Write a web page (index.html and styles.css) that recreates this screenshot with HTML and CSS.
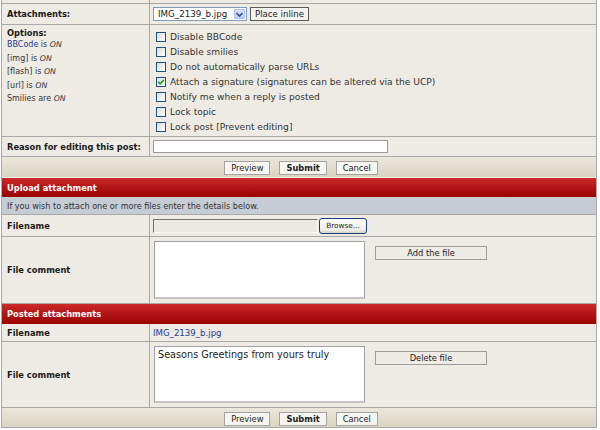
FILE: index.html
```html
<!DOCTYPE html>
<html>
<head>
<meta charset="utf-8">
<title>Edit post</title>
<link rel="stylesheet" href="styles.css">
</head>
<body>
<div class="frame">
  <div class="row stub"><div class="lc"></div><div class="rc"></div></div>

  <div class="row r-attach">
    <div class="lc"><span class="lbl">Attachments:</span></div>
    <div class="rc">
      <div class="select">
        <span class="sel-text">IMG_2139_b.jpg</span>
        <span class="sel-btn"><svg width="9" height="9" viewBox="0 0 9 9"><path d="M1.5 3 L4.5 6 L7.5 3" fill="none" stroke="#3a4f82" stroke-width="1.6"/></svg></span>
      </div>
      <span class="btn btn-dark">Place inline</span>
    </div>
  </div>

  <div class="row r-options">
    <div class="lc">
      <span class="lbl">Options:</span>
      <div class="opt-info">
        <div><span class="lnk">BBCode</span> is <i>ON</i></div>
        <div>[img] is <i>ON</i></div>
        <div>[flash] is <i>ON</i></div>
        <div>[url] is <i>ON</i></div>
        <div>Smilies are <i>ON</i></div>
      </div>
    </div>
    <div class="rc">
      <ul class="checks">
        <li><span class="cb"></span>Disable BBCode</li>
        <li><span class="cb"></span>Disable smilies</li>
        <li><span class="cb"></span>Do not automatically parse URLs</li>
        <li><span class="cb"><svg width="8" height="8" viewBox="0 0 8 8"><path d="M1.2 3.8 L3.2 5.8 L6.9 1.9" fill="none" stroke="#21a121" stroke-width="1.7"/></svg></span>Attach a signature (signatures can be altered via the UCP)</li>
        <li><span class="cb"></span>Notify me when a reply is posted</li>
        <li><span class="cb"></span>Lock topic</li>
        <li><span class="cb"></span>Lock post [Prevent editing]</li>
      </ul>
    </div>
  </div>

  <div class="row r-reason">
    <div class="lc"><span class="lbl">Reason for editing this post:</span></div>
    <div class="rc"><span class="input"></span></div>
  </div>

  <div class="bar-buttons">
    <span class="btn">Preview</span>
    <span class="btn bold">Submit</span>
    <span class="btn">Cancel</span>
  </div>

  <div class="cat">Upload attachment</div>
  <div class="info">If you wish to attach one or more files enter the details below.</div>

  <div class="row r-file">
    <div class="lc"><span class="lbl">Filename</span></div>
    <div class="rc">
      <span class="file-box"></span>
      <span class="browse">Browse...</span>
    </div>
  </div>

  <div class="row r-comment">
    <div class="lc"><span class="lbl">File comment</span></div>
    <div class="rc">
      <div class="textarea"></div>
      <span class="btn btn-wide">Add the file</span>
    </div>
  </div>

  <div class="cat cat2">Posted attachments</div>

  <div class="row r-file2">
    <div class="lc"><span class="lbl">Filename</span></div>
    <div class="rc"><span class="lnk file-link">IMG_2139_b.jpg</span></div>
  </div>

  <div class="row r-comment2">
    <div class="lc"><span class="lbl">File comment</span></div>
    <div class="rc">
      <div class="textarea">Seasons Greetings from yours truly</div>
      <span class="btn btn-wide">Delete file</span>
    </div>
  </div>

  <div class="bar-buttons bar-last">
    <span class="btn">Preview</span>
    <span class="btn bold">Submit</span>
    <span class="btn">Cancel</span>
  </div>
</div>
</body>
</html>
```

FILE: styles.css
```css
* { box-sizing: border-box; }
html, body { margin: 0; padding: 0; background: #ffffff; }
body {
  font-family: "DejaVu Sans", Verdana, sans-serif;
  font-size: 8.3px;
  color: #222222;
}

.frame {
  margin-left: 1px;
  width: 596px;
  border-left: 1px solid #a8a8a8;
  border-right: 1px solid #a8a8a8;
}

.row {
  display: grid;
  grid-template-columns: 148px 1fr;
  background: #eeebe4;
  border-bottom: 1px solid #a8a8a8;
}
.lc {
  border-right: 1px solid #a8a8a8;
  padding-left: 5px;
  display: flex;
  align-items: center;
}
.rc {
  padding-left: 3px;
  display: flex;
  align-items: center;
}
.lbl { font-weight: bold; font-size: 8.3px; color: #1a1a1a; }
.lnk { color: #1e3c8c; }

.stub { height: 4px; }
.r-attach { height: 21px; }
.r-options { height: 112px; }
.r-reason { height: 20px; }
.r-file { height: 22px; }
.r-comment { height: 67px; }
.r-file2 { height: 18px; }
.r-comment2 { height: 66px; }

/* select */
.select {
  display: flex;
  align-items: center;
  width: 94px;
  height: 14px;
  background: #fff;
  border: 1px solid #7f9db9;
  padding: 1px;
}
.sel-text {
  flex: 1;
  font-size: 8.7px;
  line-height: 10px;
  padding-left: 3px;
  color: #222;
}
.sel-btn {
  width: 11px;
  height: 10px;
  border: 1px solid #a9c0ee;
  border-radius: 1px;
  background: linear-gradient(#d6e3fd, #b9cdf7);
  display: flex;
  align-items: center;
  justify-content: center;
}

.btn {
  display: inline-flex;
  align-items: center;
  justify-content: center;
  height: 14px;
  padding: 0 6px;
  font-size: 8.3px;
  line-height: 12px;
  color: #222;
  background: #f7f5ef;
  border: 1px solid #a3a3a3;
}
.btn.bold { font-weight: bold; }
.btn-dark {
  margin-left: 3px;
  padding: 0 4px;
  border-color: #5a5a5a;
  background: #f4f3ee;
  font-size: 8.6px;
}

/* options */
.r-options .lc {
  flex-direction: column;
  align-items: flex-start;
  padding-top: 3px;
}
.r-options .lbl { line-height: 10px; }
.opt-info {
  font-size: 8px;
  line-height: 13.6px;
  color: #333;
}
.opt-info i { font-size: 7.8px; }
.r-options .rc { align-items: flex-start; }
.checks {
  list-style: none;
  margin: 0;
  padding: 4px 0 0 3px;
}
.checks li {
  display: flex;
  align-items: center;
  height: 15px;
  font-size: 9.1px;
  color: #333;
}
.cb {
  width: 10px;
  height: 10px;
  margin-right: 4px;
  border: 1px solid #1c5180;
  background: linear-gradient(135deg, #dcdcd5, #ffffff);
  display: inline-flex;
  align-items: center;
  justify-content: center;
}

.input {
  width: 235px;
  height: 13px;
  background: #fff;
  border: 1px solid #9a9a9a;
}

.bar-buttons {
  display: flex;
  justify-content: center;
  gap: 9px;
  height: 21px;
  padding: 4px 0 0 4px;
  background: linear-gradient(#ebe7db, #dad4c2);
  border-bottom: 1px solid #f3f1ea;
}
.bar-last {
  height: 20px;
  padding-top: 4px;
  border-bottom: 1px solid #a8a8a8;
}

.cat {
  height: 19px;
  display: flex;
  align-items: center;
  padding-left: 5px;
  color: #ffffff;
  font-weight: bold;
  font-size: 8.3px;
  background: linear-gradient(#cb2a2a, #b11414 50%, #9b0303);
}
.cat2 { height: 20px; }

.info {
  height: 18px;
  display: flex;
  align-items: center;
  padding-left: 5px;
  font-size: 8.1px;
  color: #333;
  background: #c6ccd4;
  border-bottom: 1px solid #a8a8a8;
}

.file-box {
  width: 165px;
  height: 14px;
  background: #ece9e1;
  border-top: 1px solid #6f6f6f;
  border-left: 1px solid #6f6f6f;
  border-right: 1px solid #f7f6f2;
  border-bottom: 1px solid #f7f6f2;
}
.browse {
  margin-left: 1px;
  width: 48px;
  height: 16px;
  display: inline-flex;
  align-items: center;
  justify-content: center;
  font-size: 7.3px;
  color: #222;
  border: 1px solid #1b3f78;
  border-radius: 3px;
  background: linear-gradient(#ffffff, #ecebe5 80%, #d6d0c5);
}

.r-comment .rc, .r-comment2 .rc {
  align-items: flex-start;
  padding-top: 4px;
}
.textarea {
  margin-left: 1px;
  width: 211px;
  height: 58px;
  background: #fff;
  border: 1px solid #a0a0a0;
  border-bottom: 2px solid #c4c4c4;
  padding: 2px 3px;
  font-size: 9.7px;
  line-height: 12px;
  color: #222;
}
.r-comment2 .textarea { height: 57px; }
.btn-wide {
  margin-left: 10px;
  margin-top: 5px;
  width: 112px;
  height: 14px;
  background: #efece5;
  border: 1px solid #9d9d9d;
}
.file-link { font-size: 8.6px; }
```
